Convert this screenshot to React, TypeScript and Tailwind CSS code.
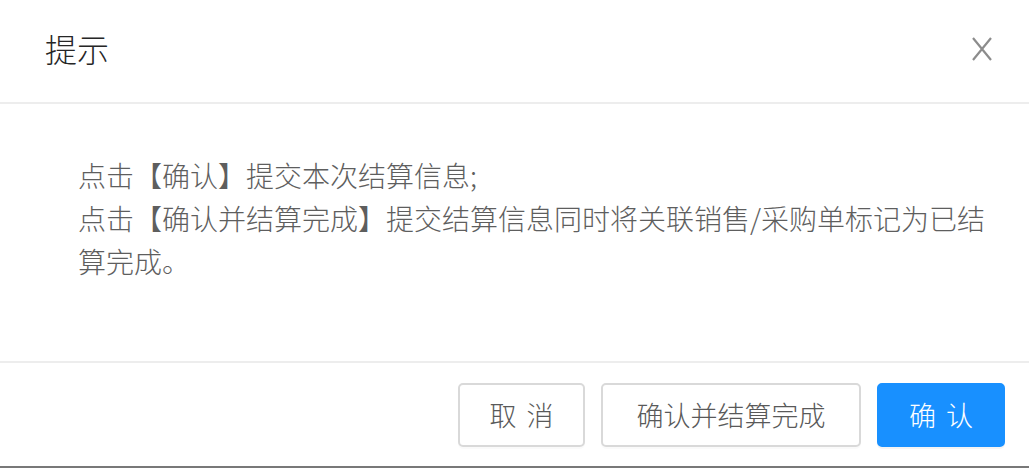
import React from "react";

export default function App() {
  const font = { fontFamily: '"Noto Sans CJK SC", "Noto Sans", sans-serif' };
  return (
    <div className="w-[1029px] h-[468px] bg-white flex flex-col overflow-hidden font-light" style={font}>
      <div className="h-[104px] shrink-0 flex items-center justify-between pl-[45px] pr-[36px] pb-[6px] border-b-2 border-[#ededed]">
        <div className="text-[32px] text-[#262626] leading-none">提示</div>
        <svg width="22" height="24" viewBox="0 0 22 24" className="mt-[2px]">
          <path d="M2 1 L20 23 M20 1 L2 23" stroke="#8c8c8c" strokeWidth="2.2" fill="none" />
        </svg>
      </div>
      <div className="h-[257px] shrink-0 pl-[78px] pr-[40px] pt-[50px] text-[28px] leading-[43px] text-[#5e5e5e]">
        <p>点击【确认】提交本次结算信息;</p>
        <p>点击【确认并结算完成】提交结算信息同时将关联销售/采购单标记为已结算完成。</p>
      </div>
      <div className="flex-1 border-t-2 border-[#ededed] flex justify-end items-start gap-[16px] pr-[24px] pt-[20px] border-b-[2px] border-b-[#787878]">
        <button className="w-[127px] h-[64px] border-2 border-[#d9d9d9] rounded-[5px] bg-white text-[27px] text-[#595959] flex items-center justify-center shadow-[0_2px_0_rgba(0,0,0,0.02)]">
          <span className="tracking-[10px] mr-[-10px]">取消</span>
        </button>
        <button className="w-[260px] h-[64px] border-2 border-[#d9d9d9] rounded-[5px] bg-white text-[27px] text-[#595959] flex items-center justify-center shadow-[0_2px_0_rgba(0,0,0,0.02)]">
          确认并结算完成
        </button>
        <button className="w-[128px] h-[64px] border-2 border-[#1890ff] rounded-[5px] bg-[#1890ff] text-[27px] text-white flex items-center justify-center shadow-[0_2px_0_rgba(0,0,0,0.045)]">
          <span className="tracking-[10px] mr-[-10px]">确认</span>
        </button>
      </div>
    </div>
  );
}
